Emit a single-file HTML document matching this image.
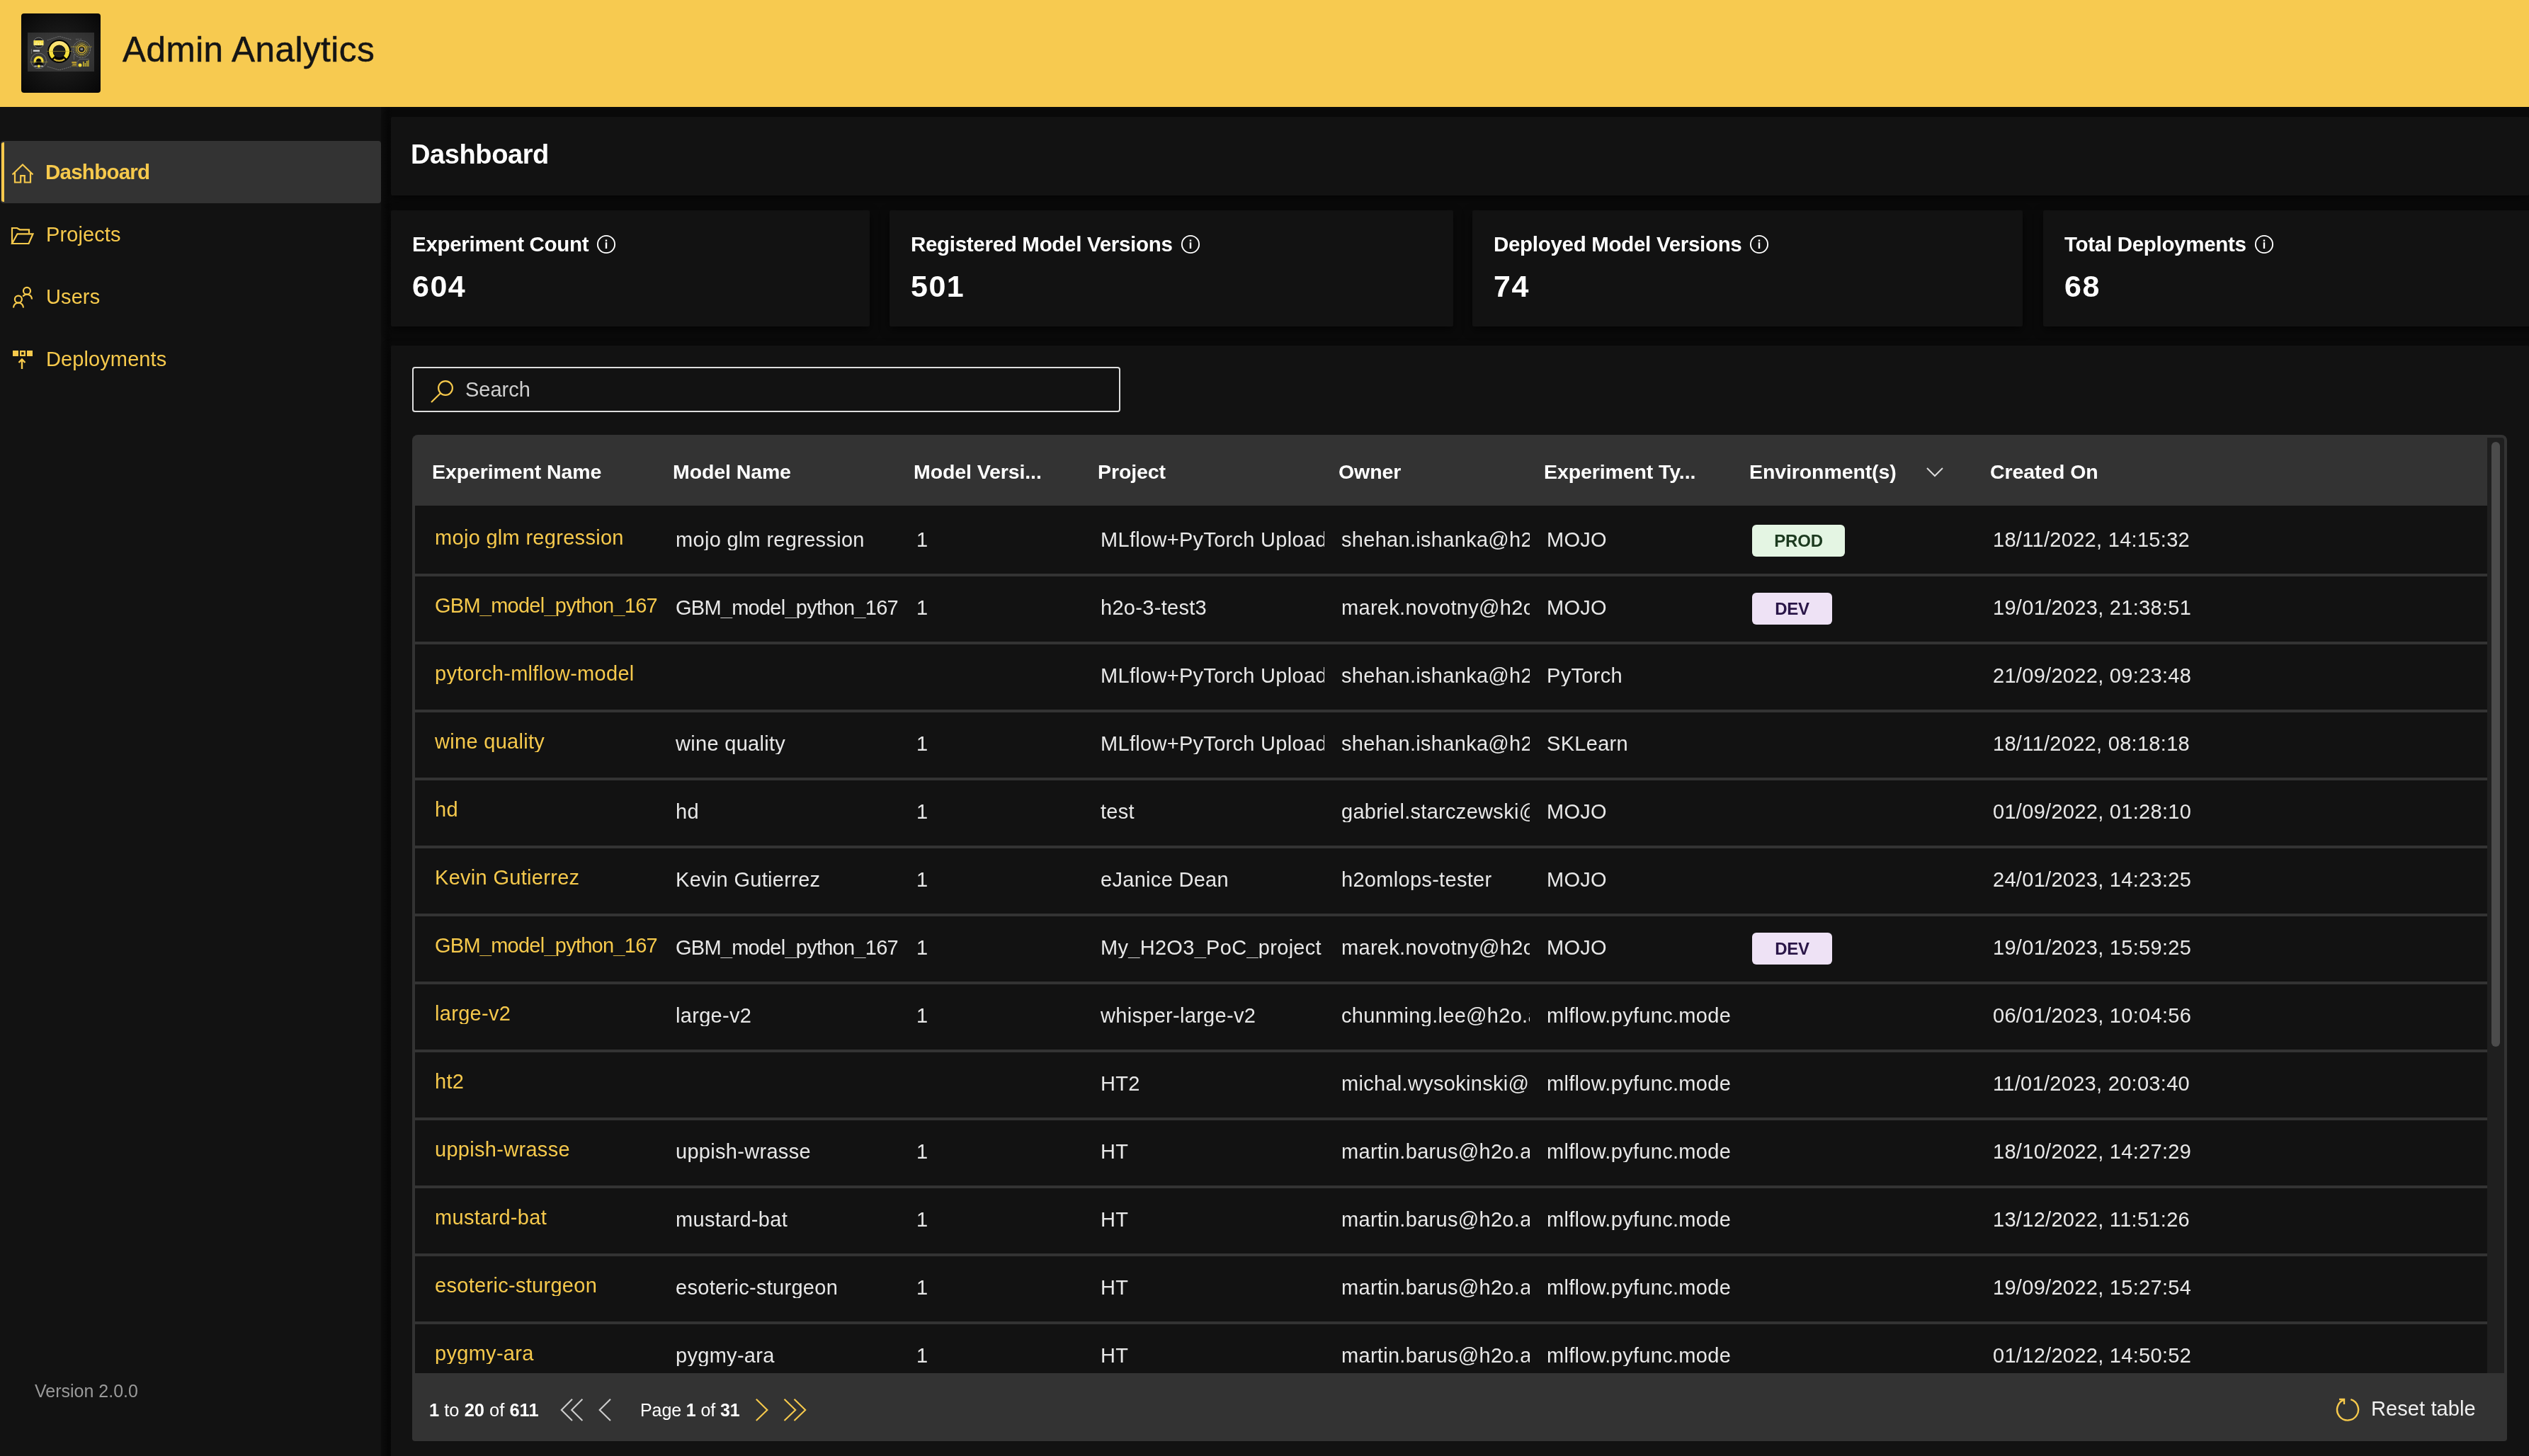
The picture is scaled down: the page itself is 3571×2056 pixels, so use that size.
<!DOCTYPE html>
<html><head><meta charset="utf-8"><style>
html,body{margin:0;padding:0;width:3571px;height:2056px;overflow:hidden;background:#0a0a0a;font-family:"Liberation Sans",sans-serif}
.t{position:absolute;white-space:nowrap;line-height:1;-webkit-font-smoothing:antialiased;will-change:transform}
.card{position:absolute;background:#121212;border-radius:2px;box-shadow:0 5px 14px rgba(0,0,0,0.6)}
b{font-weight:700}
</style></head><body>
<div style="position:absolute;left:0;top:0;width:3571px;height:151px;background:#f7ca50"></div>
<svg style="position:absolute;left:0;top:0" width="160" height="151" viewBox="0 0 160 151">
<defs><radialGradient id="lg" cx="0.5" cy="0.5" r="0.7"><stop offset="0" stop-color="#222"/><stop offset="1" stop-color="#070707"/></radialGradient>
<radialGradient id="pg" cx="0.5" cy="0.5" r="0.7"><stop offset="0" stop-color="#444"/><stop offset="1" stop-color="#2e2e2e"/></radialGradient>
<linearGradient id="yg" x1="0" y1="0" x2="0" y2="1"><stop offset="0" stop-color="#fbe27a"/><stop offset="1" stop-color="#f2dc2a"/></linearGradient></defs>
<rect x="30" y="19" width="112" height="112" rx="4" fill="url(#lg)"/>
<rect x="39" y="46" width="94" height="55" fill="url(#pg)"/>
<path d="M66.8 56.8 L83.6 51.3 L101.3 56.3 M66.8 94 L83.6 98.9 L101.3 94" stroke="#8a8a8a" stroke-width="0.7" fill="none" stroke-dasharray="2 1"/>
<circle cx="83.6" cy="72.6" r="16.5" fill="#030303"/>
<path d="M75.3 80.9 A11.75 11.75 0 1 1 91.9 80.9" stroke="url(#yg)" stroke-width="5.5" fill="none"/>
<circle cx="83.6" cy="72.6" r="8.7" fill="#1c1c1c"/>
<path d="M76 83.5 A13 13 0 0 0 91.2 83.5" stroke="#d2b232" stroke-width="2.2" fill="none"/>
<line x1="66" y1="72.4" x2="101.7" y2="72.4" stroke="#b8a22a" stroke-width="0.6"/>
<circle cx="54.6" cy="60.4" r="7.3" fill="#262626" stroke="#8a8a8a" stroke-width="0.8"/>
<rect x="47.6" y="57" width="13.8" height="7" fill="#f6de4a"/>
<path d="M49.5 64 V60 M52 64 V58.5 M54.5 64 V60.5 M57 64 V59 M59.5 64 V61" stroke="#fff6c0" stroke-width="0.9"/>
<rect x="46.9" y="70.6" width="9.1" height="2.2" fill="#ddd"/>
<path d="M44.5 69 V76" stroke="#777" stroke-width="0.7"/>
<circle cx="54.6" cy="85.8" r="10.9" fill="none" stroke="#7a7a7a" stroke-width="0.8"/>
<path d="M49.4 88.2 A5.5 5.5 0 1 1 59.8 88.2" stroke="#f6dc3a" stroke-width="3.2" fill="none"/>
<circle cx="54.6" cy="85.8" r="3" fill="#0a0a0a"/>
<path d="M48.4 90.3 L54.6 87.2 L61.2 90.3 V91.5 H48.4 Z" fill="#050505"/>
<line x1="42.3" y1="87.6" x2="67.7" y2="87.6" stroke="#a89a2a" stroke-width="0.6"/>
<circle cx="54.8" cy="93.5" r="2.1" fill="#f4e040"/>
<rect x="48.5" y="92.8" width="3.5" height="1.3" fill="#ccc"/><rect x="57.5" y="92.8" width="3.5" height="1.3" fill="#ccc"/>
<circle cx="115.3" cy="69.5" r="12.1" fill="none" stroke="#8a8a8a" stroke-width="0.8" stroke-dasharray="3 1"/>
<circle cx="115.3" cy="69.5" r="9.5" fill="none" stroke="#c8ae2a" stroke-width="0.8" stroke-dasharray="1 0.8"/>
<circle cx="115.3" cy="69.5" r="7.5" fill="none" stroke="#d8c030" stroke-width="1"/>
<circle cx="115.3" cy="69.5" r="5" fill="#202020" stroke="#e0b830" stroke-width="1.4"/>
<rect x="113.5" y="68" width="3.6" height="3" fill="#888"/>
<line x1="100" y1="66.1" x2="129.8" y2="66.1" stroke="#b8a22a" stroke-width="0.7"/>
<path d="M104.5 77 V84.4 M109 95 V87.5 L112.5 83.6 H126" stroke="#777" stroke-width="0.7" fill="none"/>
<circle cx="113" cy="92.1" r="2.5" fill="#f4dc3a"/>
<rect x="117.1" y="87" width="1.4" height="7" fill="#d8c030"/><rect x="119.6" y="89" width="1.4" height="5" fill="#d8c030"/><rect x="122.1" y="86" width="1.4" height="8" fill="#d8c030"/><rect x="124.3" y="85" width="1.2" height="9" fill="#d8c030"/>
<rect x="101.3" y="87.1" width="6.7" height="2.2" fill="#c0a030"/><rect x="102.3" y="90" width="5.7" height="1.5" fill="#c0a030"/><rect x="101.3" y="92.2" width="6.7" height="1.3" fill="#a08a30"/>
<path d="M107.5 54.5 V56.5 M109 54.5 V56.5 M110.5 54.5 V56.5 M113 54.5 V56.5 M114.5 54.5 V56.5" stroke="#777" stroke-width="0.6"/>
</svg>
<div class="t" style="left:173px;top:45.2px;font-size:49.5px;font-weight:400;color:#151515;letter-spacing:0.45px;-webkit-text-stroke:0.5px #151515;">Admin Analytics</div>
<div style="position:absolute;left:0;top:151px;width:538px;height:1905px;background:#121212"></div>
<div style="position:absolute;left:538px;top:151px;width:16px;height:1905px;background:linear-gradient(90deg,#0d0d0d,#080808 60%,#0a0a0a)"></div>
<div style="position:absolute;left:1px;top:199px;width:537px;height:88px;background:#333;border-radius:4px"></div>
<div style="position:absolute;left:2px;top:201px;width:4px;height:84px;background:#f6c94c;border-radius:3px 0 0 3px"></div>
<div class="t" style="left:63.5px;top:227.9px;font-size:29.5px;font-weight:700;color:#f6c94c;letter-spacing:-0.75px;">Dashboard</div>
<div class="t" style="left:64.5px;top:316.7px;font-size:29px;font-weight:400;color:#f6c94c;letter-spacing:0.1px;">Projects</div>
<div class="t" style="left:64.5px;top:404.9px;font-size:29px;font-weight:400;color:#f6c94c;letter-spacing:0.1px;">Users</div>
<div class="t" style="left:64.5px;top:492.8px;font-size:29px;font-weight:400;color:#f6c94c;letter-spacing:0.1px;">Deployments</div>
<div class="t" style="left:48.6px;top:1952.2px;font-size:25px;font-weight:400;color:#9a9a9a;letter-spacing:0px;">Version 2.0.0</div>
<svg style="position:absolute;left:0;top:151px" width="60" height="400" viewBox="0 151 60 400" fill="none" stroke="#f6c94c" stroke-width="2.2">
<path d="M17.5 246.5 L32 232.5 L46.5 246.5"/>
<path d="M21 244 V257.5 H29.2 V248.2 H34.8 V257.5 H43 V244"/>
<path d="M17 344 V322 H24 L28 324.3 H41 V329.5"/>
<path d="M17 344 L24.5 330.3 H46.5 L40.5 344 Z"/>
<circle cx="38" cy="410.8" r="5"/>
<path d="M32.3 418.6 A7 7 0 0 1 45 422.5"/>
<circle cx="25.9" cy="422.6" r="5"/>
<path d="M19 434.5 A7 7 0 0 1 33 434.5"/>
<path d="M31 521 V507.5 M26.5 512 L31 507.5 L35.5 512" stroke-width="2.4"/>
</svg>
<svg style="position:absolute;left:0;top:490px" width="60" height="20" viewBox="0 490 60 20">
<rect x="18" y="495" width="8" height="8" fill="#f6c94c"/>
<path d="M28 495 H36 V503 H28 Z M30.3 497.3 V500.7 H33.7 V497.3 Z" fill="#f6c94c" fill-rule="evenodd"/>
<rect x="38" y="495" width="8" height="8" fill="#f6c94c"/>
</svg>
<div class="card" style="left:552px;top:165px;width:3019px;height:111px"></div>
<div class="t" style="left:580px;top:198.7px;font-size:38px;font-weight:700;color:#fff;letter-spacing:-0.4px;">Dashboard</div>
<div class="card" style="left:552px;top:297px;width:676px;height:164px"></div>
<div class="t" style="left:582px;top:329.9px;font-size:29.5px;font-weight:700;color:#fff;letter-spacing:-0.3px;display:flex;align-items:baseline">Experiment Count<svg style="margin-left:11px;align-self:center;position:relative;top:0px" width="28" height="28" viewBox="0 0 28 28"><circle cx="14" cy="14" r="12.1" fill="none" stroke="#fff" stroke-width="1.9"/><rect x="12.8" y="7.5" width="2.4" height="2.4" fill="#fff"/><rect x="12.8" y="11.2" width="2.4" height="8.8" fill="#fff"/></svg></div>
<div class="t" style="left:582px;top:383.4px;font-size:43px;font-weight:700;color:#fff;letter-spacing:1.5px;">604</div>
<div class="card" style="left:1256px;top:297px;width:796px;height:164px"></div>
<div class="t" style="left:1286px;top:329.9px;font-size:29.5px;font-weight:700;color:#fff;letter-spacing:-0.3px;display:flex;align-items:baseline">Registered Model Versions<svg style="margin-left:11px;align-self:center;position:relative;top:0px" width="28" height="28" viewBox="0 0 28 28"><circle cx="14" cy="14" r="12.1" fill="none" stroke="#fff" stroke-width="1.9"/><rect x="12.8" y="7.5" width="2.4" height="2.4" fill="#fff"/><rect x="12.8" y="11.2" width="2.4" height="8.8" fill="#fff"/></svg></div>
<div class="t" style="left:1286px;top:383.4px;font-size:43px;font-weight:700;color:#fff;letter-spacing:1.5px;">501</div>
<div class="card" style="left:2079px;top:297px;width:777px;height:164px"></div>
<div class="t" style="left:2109px;top:329.9px;font-size:29.5px;font-weight:700;color:#fff;letter-spacing:-0.3px;display:flex;align-items:baseline">Deployed Model Versions<svg style="margin-left:11px;align-self:center;position:relative;top:0px" width="28" height="28" viewBox="0 0 28 28"><circle cx="14" cy="14" r="12.1" fill="none" stroke="#fff" stroke-width="1.9"/><rect x="12.8" y="7.5" width="2.4" height="2.4" fill="#fff"/><rect x="12.8" y="11.2" width="2.4" height="8.8" fill="#fff"/></svg></div>
<div class="t" style="left:2109px;top:383.4px;font-size:43px;font-weight:700;color:#fff;letter-spacing:1.5px;">74</div>
<div class="card" style="left:2885px;top:297px;width:815px;height:164px"></div>
<div class="t" style="left:2915px;top:329.9px;font-size:29.5px;font-weight:700;color:#fff;letter-spacing:-0.3px;display:flex;align-items:baseline">Total Deployments<svg style="margin-left:11px;align-self:center;position:relative;top:0px" width="28" height="28" viewBox="0 0 28 28"><circle cx="14" cy="14" r="12.1" fill="none" stroke="#fff" stroke-width="1.9"/><rect x="12.8" y="7.5" width="2.4" height="2.4" fill="#fff"/><rect x="12.8" y="11.2" width="2.4" height="8.8" fill="#fff"/></svg></div>
<div class="t" style="left:2915px;top:383.4px;font-size:43px;font-weight:700;color:#fff;letter-spacing:1.5px;">68</div>
<div class="card" style="left:552px;top:488px;width:3019px;height:1600px"></div>
<div style="position:absolute;left:582px;top:518px;width:996px;height:60px;border:2px solid #dedede;border-radius:4px"></div>
<svg style="position:absolute;left:600px;top:528px" width="50" height="50" viewBox="600 528 50 50" fill="none" stroke="#f6c94c" stroke-width="2.2"><circle cx="629" cy="548" r="9.9"/><path d="M622 555.2 L609 568"/></svg>
<div class="t" style="left:656.6px;top:535.9px;font-size:29px;font-weight:400;color:#cfcfcf;letter-spacing:0px;">Search</div>
<div style="position:absolute;left:582px;top:614px;width:2958px;height:1421px;background:#333;border-radius:8px 8px 4px 4px"></div>
<div style="position:absolute;left:586px;top:714px;width:2926px;height:1225px;background:#121212"></div>
<div style="position:absolute;left:3512px;top:618px;width:24px;height:1321px;background:#1f1f1f;border-radius:0 4px 0 0"></div>
<div style="position:absolute;left:3518px;top:624px;width:12px;height:854px;background:#4c4c4c;border-radius:6px"></div>
<div class="t" style="left:610px;top:652.3px;font-size:28.5px;font-weight:700;color:#fff;letter-spacing:-0.1px;">Experiment Name</div>
<div class="t" style="left:950px;top:652.3px;font-size:28.5px;font-weight:700;color:#fff;letter-spacing:-0.1px;">Model Name</div>
<div class="t" style="left:1290px;top:652.3px;font-size:28.5px;font-weight:700;color:#fff;letter-spacing:-0.1px;">Model Versi...</div>
<div class="t" style="left:1550px;top:652.3px;font-size:28.5px;font-weight:700;color:#fff;letter-spacing:-0.1px;">Project</div>
<div class="t" style="left:1890px;top:652.3px;font-size:28.5px;font-weight:700;color:#fff;letter-spacing:-0.1px;">Owner</div>
<div class="t" style="left:2180px;top:652.3px;font-size:28.5px;font-weight:700;color:#fff;letter-spacing:-0.1px;">Experiment Ty...</div>
<div class="t" style="left:2470px;top:652.3px;font-size:28.5px;font-weight:700;color:#fff;letter-spacing:-0.1px;">Environment(s)</div>
<div class="t" style="left:2810px;top:652.3px;font-size:28.5px;font-weight:700;color:#fff;letter-spacing:-0.1px;">Created On</div>
<svg style="position:absolute;left:2710px;top:650px" width="40" height="30" viewBox="2710 650 40 30" fill="none" stroke="#dcdcdc" stroke-width="2"><path d="M2721 661 L2732 672 L2743 661"/></svg>
<div style="position:absolute;left:582px;top:714px;width:2930px;height:1225px;overflow:hidden">
<div style="position:absolute;left:4px;top:96px;width:2926px;height:4px;background:#333"></div>
<div class="t" style="left:8px;top:31.4px;width:340px;overflow:hidden;padding-left:24px;box-sizing:border-box;font-size:29px;color:#f6c94c;letter-spacing:0.3px">mojo glm regression</div>
<div class="t" style="left:348px;top:34.1px;width:340px;overflow:hidden;padding-left:24px;box-sizing:border-box;font-size:29px;color:#e8e8e8;letter-spacing:0.3px">mojo glm regression</div>
<div class="t" style="left:688px;top:34.1px;width:260px;overflow:hidden;padding-left:24px;box-sizing:border-box;font-size:29px;color:#e8e8e8;letter-spacing:0.3px">1</div>
<div class="t" style="left:948px;top:34.1px;width:340px;overflow:hidden;padding-left:24px;box-sizing:border-box;font-size:29px;color:#e8e8e8;letter-spacing:0.3px">MLflow+PyTorch Upload</div>
<div class="t" style="left:1288px;top:34.1px;width:290px;overflow:hidden;padding-left:24px;box-sizing:border-box;font-size:29px;color:#e8e8e8;letter-spacing:0.3px">shehan.ishanka@h2o.ai</div>
<div class="t" style="left:1578px;top:34.1px;width:290px;overflow:hidden;padding-left:24px;box-sizing:border-box;font-size:29px;color:#e8e8e8;letter-spacing:0.3px">MOJO</div>
<div style="position:absolute;left:1892px;top:27px;width:131px;height:45px;background:#e4f5e3;border-radius:6px"></div>
<div class="t" style="left:1892px;top:37.8px;width:131px;text-align:center;font-size:24px;font-weight:700;color:#1c3a1f;letter-spacing:-0.2px">PROD</div>
<div class="t" style="left:2208px;top:34.1px;width:730px;overflow:hidden;padding-left:24px;box-sizing:border-box;font-size:29px;color:#e8e8e8;letter-spacing:0.3px">18/11/2022, 14:15:32</div>
<div style="position:absolute;left:4px;top:192px;width:2926px;height:4px;background:#333"></div>
<div class="t" style="left:8px;top:127.4px;width:340px;overflow:hidden;padding-left:24px;box-sizing:border-box;font-size:29px;color:#f6c94c;letter-spacing:-0.75px">GBM_model_python_167</div>
<div class="t" style="left:348px;top:130.1px;width:340px;overflow:hidden;padding-left:24px;box-sizing:border-box;font-size:29px;color:#e8e8e8;letter-spacing:-0.75px">GBM_model_python_167</div>
<div class="t" style="left:688px;top:130.1px;width:260px;overflow:hidden;padding-left:24px;box-sizing:border-box;font-size:29px;color:#e8e8e8;letter-spacing:0.3px">1</div>
<div class="t" style="left:948px;top:130.1px;width:340px;overflow:hidden;padding-left:24px;box-sizing:border-box;font-size:29px;color:#e8e8e8;letter-spacing:0.3px">h2o-3-test3</div>
<div class="t" style="left:1288px;top:130.1px;width:290px;overflow:hidden;padding-left:24px;box-sizing:border-box;font-size:29px;color:#e8e8e8;letter-spacing:0.3px">marek.novotny@h2o.ai</div>
<div class="t" style="left:1578px;top:130.1px;width:290px;overflow:hidden;padding-left:24px;box-sizing:border-box;font-size:29px;color:#e8e8e8;letter-spacing:0.3px">MOJO</div>
<div style="position:absolute;left:1892px;top:123px;width:113px;height:45px;background:#eee2f5;border-radius:6px"></div>
<div class="t" style="left:1892px;top:133.8px;width:113px;text-align:center;font-size:24px;font-weight:700;color:#2a1648;letter-spacing:-0.2px">DEV</div>
<div class="t" style="left:2208px;top:130.1px;width:730px;overflow:hidden;padding-left:24px;box-sizing:border-box;font-size:29px;color:#e8e8e8;letter-spacing:0.3px">19/01/2023, 21:38:51</div>
<div style="position:absolute;left:4px;top:288px;width:2926px;height:4px;background:#333"></div>
<div class="t" style="left:8px;top:223.4px;width:340px;overflow:hidden;padding-left:24px;box-sizing:border-box;font-size:29px;color:#f6c94c;letter-spacing:0.3px">pytorch-mlflow-model</div>
<div class="t" style="left:948px;top:226.1px;width:340px;overflow:hidden;padding-left:24px;box-sizing:border-box;font-size:29px;color:#e8e8e8;letter-spacing:0.3px">MLflow+PyTorch Upload</div>
<div class="t" style="left:1288px;top:226.1px;width:290px;overflow:hidden;padding-left:24px;box-sizing:border-box;font-size:29px;color:#e8e8e8;letter-spacing:0.3px">shehan.ishanka@h2o.ai</div>
<div class="t" style="left:1578px;top:226.1px;width:290px;overflow:hidden;padding-left:24px;box-sizing:border-box;font-size:29px;color:#e8e8e8;letter-spacing:0.3px">PyTorch</div>
<div class="t" style="left:2208px;top:226.1px;width:730px;overflow:hidden;padding-left:24px;box-sizing:border-box;font-size:29px;color:#e8e8e8;letter-spacing:0.3px">21/09/2022, 09:23:48</div>
<div style="position:absolute;left:4px;top:384px;width:2926px;height:4px;background:#333"></div>
<div class="t" style="left:8px;top:319.4px;width:340px;overflow:hidden;padding-left:24px;box-sizing:border-box;font-size:29px;color:#f6c94c;letter-spacing:0.3px">wine quality</div>
<div class="t" style="left:348px;top:322.1px;width:340px;overflow:hidden;padding-left:24px;box-sizing:border-box;font-size:29px;color:#e8e8e8;letter-spacing:0.3px">wine quality</div>
<div class="t" style="left:688px;top:322.1px;width:260px;overflow:hidden;padding-left:24px;box-sizing:border-box;font-size:29px;color:#e8e8e8;letter-spacing:0.3px">1</div>
<div class="t" style="left:948px;top:322.1px;width:340px;overflow:hidden;padding-left:24px;box-sizing:border-box;font-size:29px;color:#e8e8e8;letter-spacing:0.3px">MLflow+PyTorch Upload</div>
<div class="t" style="left:1288px;top:322.1px;width:290px;overflow:hidden;padding-left:24px;box-sizing:border-box;font-size:29px;color:#e8e8e8;letter-spacing:0.3px">shehan.ishanka@h2o.ai</div>
<div class="t" style="left:1578px;top:322.1px;width:290px;overflow:hidden;padding-left:24px;box-sizing:border-box;font-size:29px;color:#e8e8e8;letter-spacing:0.3px">SKLearn</div>
<div class="t" style="left:2208px;top:322.1px;width:730px;overflow:hidden;padding-left:24px;box-sizing:border-box;font-size:29px;color:#e8e8e8;letter-spacing:0.3px">18/11/2022, 08:18:18</div>
<div style="position:absolute;left:4px;top:480px;width:2926px;height:4px;background:#333"></div>
<div class="t" style="left:8px;top:415.4px;width:340px;overflow:hidden;padding-left:24px;box-sizing:border-box;font-size:29px;color:#f6c94c;letter-spacing:0.3px">hd</div>
<div class="t" style="left:348px;top:418.1px;width:340px;overflow:hidden;padding-left:24px;box-sizing:border-box;font-size:29px;color:#e8e8e8;letter-spacing:0.3px">hd</div>
<div class="t" style="left:688px;top:418.1px;width:260px;overflow:hidden;padding-left:24px;box-sizing:border-box;font-size:29px;color:#e8e8e8;letter-spacing:0.3px">1</div>
<div class="t" style="left:948px;top:418.1px;width:340px;overflow:hidden;padding-left:24px;box-sizing:border-box;font-size:29px;color:#e8e8e8;letter-spacing:0.3px">test</div>
<div class="t" style="left:1288px;top:418.1px;width:290px;overflow:hidden;padding-left:24px;box-sizing:border-box;font-size:29px;color:#e8e8e8;letter-spacing:0.3px">gabriel.starczewski@h2o.ai</div>
<div class="t" style="left:1578px;top:418.1px;width:290px;overflow:hidden;padding-left:24px;box-sizing:border-box;font-size:29px;color:#e8e8e8;letter-spacing:0.3px">MOJO</div>
<div class="t" style="left:2208px;top:418.1px;width:730px;overflow:hidden;padding-left:24px;box-sizing:border-box;font-size:29px;color:#e8e8e8;letter-spacing:0.3px">01/09/2022, 01:28:10</div>
<div style="position:absolute;left:4px;top:576px;width:2926px;height:4px;background:#333"></div>
<div class="t" style="left:8px;top:511.4px;width:340px;overflow:hidden;padding-left:24px;box-sizing:border-box;font-size:29px;color:#f6c94c;letter-spacing:0.3px">Kevin Gutierrez</div>
<div class="t" style="left:348px;top:514.1px;width:340px;overflow:hidden;padding-left:24px;box-sizing:border-box;font-size:29px;color:#e8e8e8;letter-spacing:0.3px">Kevin Gutierrez</div>
<div class="t" style="left:688px;top:514.1px;width:260px;overflow:hidden;padding-left:24px;box-sizing:border-box;font-size:29px;color:#e8e8e8;letter-spacing:0.3px">1</div>
<div class="t" style="left:948px;top:514.1px;width:340px;overflow:hidden;padding-left:24px;box-sizing:border-box;font-size:29px;color:#e8e8e8;letter-spacing:0.3px">eJanice Dean</div>
<div class="t" style="left:1288px;top:514.1px;width:290px;overflow:hidden;padding-left:24px;box-sizing:border-box;font-size:29px;color:#e8e8e8;letter-spacing:0.3px">h2omlops-tester</div>
<div class="t" style="left:1578px;top:514.1px;width:290px;overflow:hidden;padding-left:24px;box-sizing:border-box;font-size:29px;color:#e8e8e8;letter-spacing:0.3px">MOJO</div>
<div class="t" style="left:2208px;top:514.1px;width:730px;overflow:hidden;padding-left:24px;box-sizing:border-box;font-size:29px;color:#e8e8e8;letter-spacing:0.3px">24/01/2023, 14:23:25</div>
<div style="position:absolute;left:4px;top:672px;width:2926px;height:4px;background:#333"></div>
<div class="t" style="left:8px;top:607.4px;width:340px;overflow:hidden;padding-left:24px;box-sizing:border-box;font-size:29px;color:#f6c94c;letter-spacing:-0.75px">GBM_model_python_167</div>
<div class="t" style="left:348px;top:610.1px;width:340px;overflow:hidden;padding-left:24px;box-sizing:border-box;font-size:29px;color:#e8e8e8;letter-spacing:-0.75px">GBM_model_python_167</div>
<div class="t" style="left:688px;top:610.1px;width:260px;overflow:hidden;padding-left:24px;box-sizing:border-box;font-size:29px;color:#e8e8e8;letter-spacing:0.3px">1</div>
<div class="t" style="left:948px;top:610.1px;width:340px;overflow:hidden;padding-left:24px;box-sizing:border-box;font-size:29px;color:#e8e8e8;letter-spacing:0.3px">My_H2O3_PoC_project</div>
<div class="t" style="left:1288px;top:610.1px;width:290px;overflow:hidden;padding-left:24px;box-sizing:border-box;font-size:29px;color:#e8e8e8;letter-spacing:0.3px">marek.novotny@h2o.ai</div>
<div class="t" style="left:1578px;top:610.1px;width:290px;overflow:hidden;padding-left:24px;box-sizing:border-box;font-size:29px;color:#e8e8e8;letter-spacing:0.3px">MOJO</div>
<div style="position:absolute;left:1892px;top:603px;width:113px;height:45px;background:#eee2f5;border-radius:6px"></div>
<div class="t" style="left:1892px;top:613.8px;width:113px;text-align:center;font-size:24px;font-weight:700;color:#2a1648;letter-spacing:-0.2px">DEV</div>
<div class="t" style="left:2208px;top:610.1px;width:730px;overflow:hidden;padding-left:24px;box-sizing:border-box;font-size:29px;color:#e8e8e8;letter-spacing:0.3px">19/01/2023, 15:59:25</div>
<div style="position:absolute;left:4px;top:768px;width:2926px;height:4px;background:#333"></div>
<div class="t" style="left:8px;top:703.4px;width:340px;overflow:hidden;padding-left:24px;box-sizing:border-box;font-size:29px;color:#f6c94c;letter-spacing:0.3px">large-v2</div>
<div class="t" style="left:348px;top:706.1px;width:340px;overflow:hidden;padding-left:24px;box-sizing:border-box;font-size:29px;color:#e8e8e8;letter-spacing:0.3px">large-v2</div>
<div class="t" style="left:688px;top:706.1px;width:260px;overflow:hidden;padding-left:24px;box-sizing:border-box;font-size:29px;color:#e8e8e8;letter-spacing:0.3px">1</div>
<div class="t" style="left:948px;top:706.1px;width:340px;overflow:hidden;padding-left:24px;box-sizing:border-box;font-size:29px;color:#e8e8e8;letter-spacing:0.3px">whisper-large-v2</div>
<div class="t" style="left:1288px;top:706.1px;width:290px;overflow:hidden;padding-left:24px;box-sizing:border-box;font-size:29px;color:#e8e8e8;letter-spacing:0.3px">chunming.lee@h2o.ai</div>
<div class="t" style="left:1578px;top:706.1px;width:290px;overflow:hidden;padding-left:24px;box-sizing:border-box;font-size:29px;color:#e8e8e8;letter-spacing:0.3px">mlflow.pyfunc.mode</div>
<div class="t" style="left:2208px;top:706.1px;width:730px;overflow:hidden;padding-left:24px;box-sizing:border-box;font-size:29px;color:#e8e8e8;letter-spacing:0.3px">06/01/2023, 10:04:56</div>
<div style="position:absolute;left:4px;top:864px;width:2926px;height:4px;background:#333"></div>
<div class="t" style="left:8px;top:799.4px;width:340px;overflow:hidden;padding-left:24px;box-sizing:border-box;font-size:29px;color:#f6c94c;letter-spacing:0.3px">ht2</div>
<div class="t" style="left:948px;top:802.1px;width:340px;overflow:hidden;padding-left:24px;box-sizing:border-box;font-size:29px;color:#e8e8e8;letter-spacing:0.3px">HT2</div>
<div class="t" style="left:1288px;top:802.1px;width:290px;overflow:hidden;padding-left:24px;box-sizing:border-box;font-size:29px;color:#e8e8e8;letter-spacing:0.3px">michal.wysokinski@h2o.ai</div>
<div class="t" style="left:1578px;top:802.1px;width:290px;overflow:hidden;padding-left:24px;box-sizing:border-box;font-size:29px;color:#e8e8e8;letter-spacing:0.3px">mlflow.pyfunc.mode</div>
<div class="t" style="left:2208px;top:802.1px;width:730px;overflow:hidden;padding-left:24px;box-sizing:border-box;font-size:29px;color:#e8e8e8;letter-spacing:0.3px">11/01/2023, 20:03:40</div>
<div style="position:absolute;left:4px;top:960px;width:2926px;height:4px;background:#333"></div>
<div class="t" style="left:8px;top:895.4px;width:340px;overflow:hidden;padding-left:24px;box-sizing:border-box;font-size:29px;color:#f6c94c;letter-spacing:0.3px">uppish-wrasse</div>
<div class="t" style="left:348px;top:898.1px;width:340px;overflow:hidden;padding-left:24px;box-sizing:border-box;font-size:29px;color:#e8e8e8;letter-spacing:0.3px">uppish-wrasse</div>
<div class="t" style="left:688px;top:898.1px;width:260px;overflow:hidden;padding-left:24px;box-sizing:border-box;font-size:29px;color:#e8e8e8;letter-spacing:0.3px">1</div>
<div class="t" style="left:948px;top:898.1px;width:340px;overflow:hidden;padding-left:24px;box-sizing:border-box;font-size:29px;color:#e8e8e8;letter-spacing:0.3px">HT</div>
<div class="t" style="left:1288px;top:898.1px;width:290px;overflow:hidden;padding-left:24px;box-sizing:border-box;font-size:29px;color:#e8e8e8;letter-spacing:0.3px">martin.barus@h2o.ai</div>
<div class="t" style="left:1578px;top:898.1px;width:290px;overflow:hidden;padding-left:24px;box-sizing:border-box;font-size:29px;color:#e8e8e8;letter-spacing:0.3px">mlflow.pyfunc.mode</div>
<div class="t" style="left:2208px;top:898.1px;width:730px;overflow:hidden;padding-left:24px;box-sizing:border-box;font-size:29px;color:#e8e8e8;letter-spacing:0.3px">18/10/2022, 14:27:29</div>
<div style="position:absolute;left:4px;top:1056px;width:2926px;height:4px;background:#333"></div>
<div class="t" style="left:8px;top:991.4px;width:340px;overflow:hidden;padding-left:24px;box-sizing:border-box;font-size:29px;color:#f6c94c;letter-spacing:0.3px">mustard-bat</div>
<div class="t" style="left:348px;top:994.1px;width:340px;overflow:hidden;padding-left:24px;box-sizing:border-box;font-size:29px;color:#e8e8e8;letter-spacing:0.3px">mustard-bat</div>
<div class="t" style="left:688px;top:994.1px;width:260px;overflow:hidden;padding-left:24px;box-sizing:border-box;font-size:29px;color:#e8e8e8;letter-spacing:0.3px">1</div>
<div class="t" style="left:948px;top:994.1px;width:340px;overflow:hidden;padding-left:24px;box-sizing:border-box;font-size:29px;color:#e8e8e8;letter-spacing:0.3px">HT</div>
<div class="t" style="left:1288px;top:994.1px;width:290px;overflow:hidden;padding-left:24px;box-sizing:border-box;font-size:29px;color:#e8e8e8;letter-spacing:0.3px">martin.barus@h2o.ai</div>
<div class="t" style="left:1578px;top:994.1px;width:290px;overflow:hidden;padding-left:24px;box-sizing:border-box;font-size:29px;color:#e8e8e8;letter-spacing:0.3px">mlflow.pyfunc.mode</div>
<div class="t" style="left:2208px;top:994.1px;width:730px;overflow:hidden;padding-left:24px;box-sizing:border-box;font-size:29px;color:#e8e8e8;letter-spacing:0.3px">13/12/2022, 11:51:26</div>
<div style="position:absolute;left:4px;top:1152px;width:2926px;height:4px;background:#333"></div>
<div class="t" style="left:8px;top:1087.4px;width:340px;overflow:hidden;padding-left:24px;box-sizing:border-box;font-size:29px;color:#f6c94c;letter-spacing:0.3px">esoteric-sturgeon</div>
<div class="t" style="left:348px;top:1090.1px;width:340px;overflow:hidden;padding-left:24px;box-sizing:border-box;font-size:29px;color:#e8e8e8;letter-spacing:0.3px">esoteric-sturgeon</div>
<div class="t" style="left:688px;top:1090.1px;width:260px;overflow:hidden;padding-left:24px;box-sizing:border-box;font-size:29px;color:#e8e8e8;letter-spacing:0.3px">1</div>
<div class="t" style="left:948px;top:1090.1px;width:340px;overflow:hidden;padding-left:24px;box-sizing:border-box;font-size:29px;color:#e8e8e8;letter-spacing:0.3px">HT</div>
<div class="t" style="left:1288px;top:1090.1px;width:290px;overflow:hidden;padding-left:24px;box-sizing:border-box;font-size:29px;color:#e8e8e8;letter-spacing:0.3px">martin.barus@h2o.ai</div>
<div class="t" style="left:1578px;top:1090.1px;width:290px;overflow:hidden;padding-left:24px;box-sizing:border-box;font-size:29px;color:#e8e8e8;letter-spacing:0.3px">mlflow.pyfunc.mode</div>
<div class="t" style="left:2208px;top:1090.1px;width:730px;overflow:hidden;padding-left:24px;box-sizing:border-box;font-size:29px;color:#e8e8e8;letter-spacing:0.3px">19/09/2022, 15:27:54</div>
<div class="t" style="left:8px;top:1183.4px;width:340px;overflow:hidden;padding-left:24px;box-sizing:border-box;font-size:29px;color:#f6c94c;letter-spacing:0.3px">pygmy-ara</div>
<div class="t" style="left:348px;top:1186.1px;width:340px;overflow:hidden;padding-left:24px;box-sizing:border-box;font-size:29px;color:#e8e8e8;letter-spacing:0.3px">pygmy-ara</div>
<div class="t" style="left:688px;top:1186.1px;width:260px;overflow:hidden;padding-left:24px;box-sizing:border-box;font-size:29px;color:#e8e8e8;letter-spacing:0.3px">1</div>
<div class="t" style="left:948px;top:1186.1px;width:340px;overflow:hidden;padding-left:24px;box-sizing:border-box;font-size:29px;color:#e8e8e8;letter-spacing:0.3px">HT</div>
<div class="t" style="left:1288px;top:1186.1px;width:290px;overflow:hidden;padding-left:24px;box-sizing:border-box;font-size:29px;color:#e8e8e8;letter-spacing:0.3px">martin.barus@h2o.ai</div>
<div class="t" style="left:1578px;top:1186.1px;width:290px;overflow:hidden;padding-left:24px;box-sizing:border-box;font-size:29px;color:#e8e8e8;letter-spacing:0.3px">mlflow.pyfunc.mode</div>
<div class="t" style="left:2208px;top:1186.1px;width:730px;overflow:hidden;padding-left:24px;box-sizing:border-box;font-size:29px;color:#e8e8e8;letter-spacing:0.3px">01/12/2022, 14:50:52</div>
</div>
<div class="t" style="left:606px;top:1978.8px;font-size:25.5px;font-weight:400;color:#fff;letter-spacing:0px;"><b>1</b> to <b>20</b> of <b>611</b></div>
<div class="t" style="left:903.7px;top:1979.2px;font-size:25px;font-weight:400;color:#fff;letter-spacing:-0.1px;">Page <b>1</b> of <b>31</b></div>
<svg style="position:absolute;left:780px;top:1960px" width="380" height="60" viewBox="780 1960 380 60" fill="none" stroke-width="2.1">
<path d="M808 1975.7 L792.8 1991 L808 2006.1 M822.4 1975.7 L807.2 1991 L822.4 2006.1 M862 1975.7 L846.7 1991 L862 2006.1" stroke="#cdcdcd"/>
<path d="M1067.8 1975.7 L1083.4 1991 L1067.8 2006.1 M1107.5 1975.7 L1123.2 1991 L1107.5 2006.1 M1121.5 1975.7 L1137.2 1991 L1121.5 2006.1" stroke="#f6c94c"/>
</svg>
<svg style="position:absolute;left:3280px;top:1960px" width="60" height="60" viewBox="3280 1960 60 60" fill="none" stroke="#f6c94c" stroke-width="2.4">
<path d="M3319.3 1976.2 A15 15 0 1 1 3309.6 1976.6"/>
<path d="M3303 1976 H3310 V1983"/>
</svg>
<div class="t" style="left:3347.7px;top:1974.9px;font-size:29px;font-weight:400;color:#f0f0f0;letter-spacing:0.1px;">Reset table</div>
</body></html>
